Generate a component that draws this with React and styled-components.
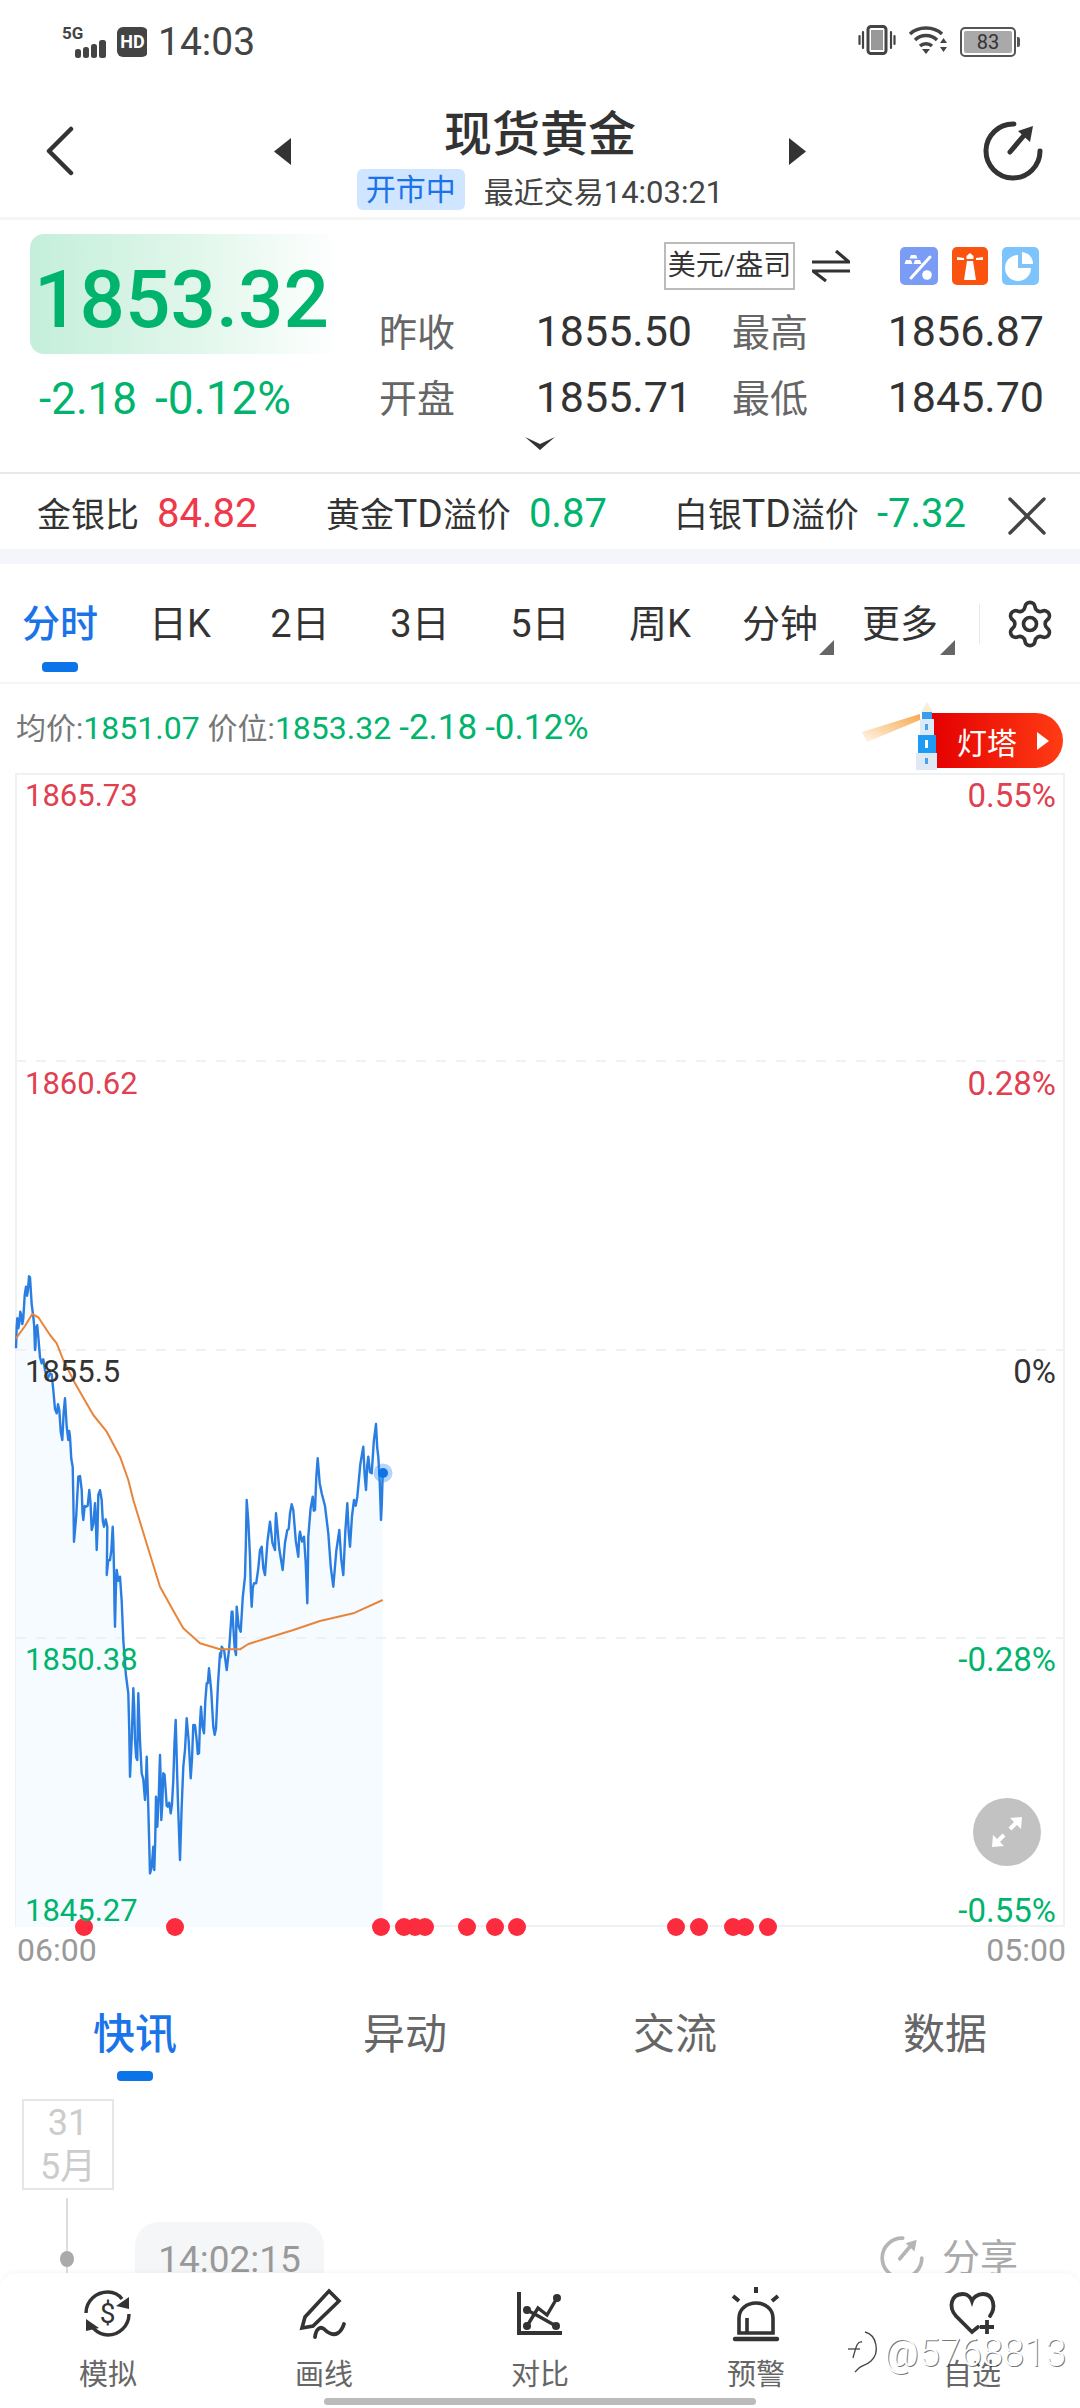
import React from 'react';
import styled, { createGlobalStyle } from 'styled-components';
import { Settings, X } from 'lucide-react';

const GREEN = '#00b46e';
const RED = '#f0384a';
const BLUE = '#0a74e8';

const GlobalStyle = createGlobalStyle`
  html, body {
    margin: 0;
    padding: 0;
    background: #fff;
  }
  * { box-sizing: border-box; }
`;

const Page = styled.div`
  position: relative;
  width: 1080px;
  height: 2408px;
  overflow: hidden;
  display: flex;
  flex-direction: column;
  background: #fff;
  color: #333;
  font-family: Roboto, "Noto Sans CJK SC", sans-serif;
`;

/* status bar */
const StatusBar = styled.div`
  height: 85px;
  display: flex;
  justify-content: space-between;
  padding: 25px 64px 0 62px;
`;

const StatusGroup = styled.div`
  display: flex;
  align-items: flex-start;
`;

const Clock = styled.span`
  font-size: 39px;
  line-height: 34px;
  margin-left: 11px;
  color: #444;
`;

const Battery = styled.div`
  position: relative;
  width: 56px;
  height: 30px;
  margin: 2px 0 0 12px;
  border: 2px solid #555;
  border-radius: 5px;
  padding: 2px;
  &::after {
    content: '';
    position: absolute;
    right: -6px;
    top: 8px;
    width: 3px;
    height: 10px;
    border-radius: 0 2px 2px 0;
    background: #555;
  }
`;

const BatteryFill = styled.div`
  height: 100%;
  background: #a9a9a9;
  border-radius: 2px;
  font-size: 20px;
  line-height: 22px;
  text-align: center;
  color: #333;
`;

/* header */
const Header = styled.header`
  height: 135px;
  display: grid;
  grid-template-columns: 274px 17px 1fr 17px 274px;
  align-items: center;
  border-bottom: 3px solid #f5f5f5;
`;

const BackCell = styled.div`
  padding-left: 45px;
  display: flex;
`;

const ShareCell = styled.div`
  padding-right: 37px;
  display: flex;
  justify-content: flex-end;
`;

const HeaderCenter = styled.div`
  display: flex;
  flex-direction: column;
  align-items: center;
  padding-top: 14px;
`;

const Title = styled.h1`
  margin: 0;
  font-size: 48px;
  line-height: 60px;
  font-weight: 500;
  color: #333;
`;

const SubLine = styled.div`
  display: flex;
  align-items: center;
  gap: 19px;
  margin-top: 3px;
  font-size: 30px;
  color: #444;
`;

const MarketBadge = styled.span`
  width: 108px;
  height: 41px;
  line-height: 41px;
  text-align: center;
  background: #d0e5ff;
  border-radius: 6px;
  color: #1a73e8;
`;

const Latin = styled.span`
  font-size: ${(p) => p.$size}px;
`;

/* quote */
const Quote = styled.section`
  position: relative;
  height: 254px;
  display: grid;
  grid-template-columns: 349px 1fr;
  padding: 14px 36px 0 30px;
  border-bottom: 2px solid #e8e8e8;
`;

const PriceBox = styled.div`
  width: 310px;
  height: 120px;
  border-radius: 14px;
  background: linear-gradient(90deg, #c4efda 0%, #e2f7ec 55%, #ffffff 100%);
  font-size: 80px;
  line-height: 120px;
  font-weight: 500;
  color: ${GREEN};
  padding: 6px 0 0 4px;
  white-space: nowrap;
`;

const ChangeLine = styled.div`
  display: flex;
  align-items: baseline;
  gap: 18px;
  margin: 22px 0 0 9px;
  font-size: 44px;
  line-height: 44px;
  color: ${GREEN};
  white-space: nowrap;
`;

const QuoteRight = styled.div`
  display: flex;
  flex-direction: column;
  margin-top: 3px;
`;

const UnitRow = styled.div`
  display: flex;
  align-items: center;
  height: 57px;
  padding-left: 285px;
`;

const UnitBox = styled.div`
  width: 131px;
  height: 48px;
  margin-right: 17px;
  border: 2px solid #bbb;
  font-size: 28px;
  line-height: 44px;
  text-align: center;
  color: #333;
  white-space: nowrap;
`;

const ToolIcons = styled.div`
  display: flex;
  gap: 14px;
  margin-left: 50px;
`;

const ToolIcon = styled.svg`
  display: block;
  border-radius: 5px;
  background: ${(p) => p.$bg};
`;

const StatsGrid = styled.div`
  display: grid;
  grid-template-columns: 313px 312px;
  column-gap: 40px;
  grid-auto-rows: 66px;
  margin-top: 5px;
  align-items: center;
`;

const Stat = styled.div`
  display: flex;
  justify-content: space-between;
  align-items: baseline;
  font-size: 38px;
  line-height: 44px;
`;

const StatLabel = styled.span`
  color: #666;
`;

const StatValue = styled.span`
  font-size: 43px;
  color: #333;
`;

const MoreChevron = styled.svg`
  position: absolute;
  left: 525px;
  top: 217px;
`;

/* ticker */
const Ticker = styled.div`
  height: 75px;
  display: grid;
  grid-template-columns: 289px 348px 336px auto;
  align-items: center;
  padding: 0 0 8px 37px;
  font-size: 34px;
  color: #333;
`;

const TickerItem = styled.div`
  display: flex;
  align-items: baseline;
  gap: 18px;
  white-space: nowrap;
`;

const TickerValue = styled.span`
  font-size: 40px;
  color: ${(p) => (p.$up ? RED : GREEN)};
`;

const CloseIcon = styled(X)`
  margin: 8px 0 0 -17px;
`;

const Band = styled.div`
  height: 15px;
  background: #f5f6fc;
`;

/* period tabs */
const PeriodBar = styled.nav`
  position: relative;
  height: 120px;
  display: grid;
  grid-template-columns: repeat(8, 120px) 1fr;
  align-items: start;
  border-bottom: 2px solid #f4f4f4;
`;

const PeriodTab = styled.div`
  position: relative;
  height: 120px;
  text-align: center;
  font-size: 38px;
  line-height: 50px;
  padding-top: 35px;
  font-weight: ${(p) => (p.$active ? 500 : 400)};
  color: ${(p) => (p.$active ? '#1a73e8' : '#333')};
`;

const Underline = styled.div`
  width: 36px;
  height: 10px;
  margin: ${(p) => p.$top}px auto 0;
  border-radius: 4px;
  background: ${BLUE};
`;

const Corner = styled.span`
  position: absolute;
  right: ${(p) => p.$right}px;
  top: 76px;
  width: 0;
  height: 0;
  border-style: solid;
  border-width: 0 0 15px 15px;
  border-color: transparent transparent #666 transparent;
`;

const GearCell = styled.div`
  display: flex;
  align-items: center;
  height: 40px;
  margin: 40px 0 0 19px;
  padding-left: 24px;
  border-left: 1px solid #e8e8e8;
  color: #333;
`;

/* info row */
const InfoRow = styled.div`
  height: 89px;
  display: flex;
  justify-content: space-between;
  padding: 0 17px 3px 16px;
  font-size: 32px;
  color: ${GREEN};
  white-space: nowrap;
`;

const InfoText = styled.div`
  display: flex;
  align-items: baseline;
  gap: 8px;
  margin-top: 24px;
  line-height: 40px;
`;

const InfoLabel = styled.span`
  font-size: 30px;
  color: #777;
`;

const Beacon = styled.div`
  display: flex;
  align-items: flex-end;
  align-self: flex-end;
`;

const BeaconArt = styled.svg`
  position: relative;
  z-index: 1;
  display: block;
`;

const BeaconPill = styled.div`
  width: 131px;
  height: 55px;
  margin: 0 0 2px -5px;
  display: flex;
  align-items: center;
  padding-left: 25px;
  gap: 20px;
  border-radius: 0 28px 28px 0;
  background: linear-gradient(90deg, #e40000 0%, #ff3c14 100%);
  color: #fff;
  font-size: 30px;
`;

const PlayMark = styled.span`
  width: 0;
  height: 0;
  border-style: solid;
  border-width: 9px 0 9px 12px;
  border-color: transparent transparent transparent #fff;
`;

/* chart */
const ChartWrap = styled.div`
  position: relative;
  height: 1154px;
  flex: none;
  margin: 0 15px;
  border: 2px solid #f0f1f3;
`;

const ChartSvg = styled.svg`
  position: absolute;
  left: -2px;
  top: -2px;
  overflow: visible;
`;

const ScaleLayer = styled.div`
  position: absolute;
  inset: 0;
  display: flex;
  flex-direction: column;
  padding: 3px 7px 0 8px;
`;

const ScaleRow = styled.div`
  height: ${(p) => p.$h}px;
  flex: none;
  display: flex;
  justify-content: space-between;
  font-size: 31px;
  line-height: 36px;
  color: ${(p) => (p.$tone === 'up' ? '#e0404f' : p.$tone === 'down' ? GREEN : '#333')};
`;

const ScaleRight = styled.span`
  font-size: 33px;
`;

const ExpandButton = styled.div`
  position: absolute;
  right: 22px;
  bottom: 59px;
  width: 68px;
  height: 68px;
  border-radius: 50%;
  background: #c2c2c2;
  display: flex;
  align-items: center;
  justify-content: center;
`;

const TimeAxis = styled.div`
  height: 43px;
  display: flex;
  justify-content: space-between;
  padding: 5px 14px 0 17px;
  font-size: 32px;
  line-height: 36px;
  color: #999;
`;

/* news */
const NewsTabs = styled.div`
  height: 115px;
  display: grid;
  grid-template-columns: repeat(4, 1fr);
  text-align: center;
`;

const NewsTab = styled.div`
  padding-top: 35px;
  font-size: 42px;
  line-height: 60px;
  color: ${(p) => (p.$active ? '#1a73e8' : '#666')};
  font-weight: ${(p) => (p.$active ? 500 : 400)};
`;

const NewsBody = styled.div`
  flex: 1;
  overflow: hidden;
`;

const DateBox = styled.div`
  width: 92px;
  height: 91px;
  margin: 14px 0 0 22px;
  border: 2px solid #e6e6e6;
  text-align: center;
  font-size: 36px;
  line-height: 44px;
  color: #ccc;
`;

const NewsRow = styled.div`
  display: flex;
  margin-top: 8px;
`;

const Rail = styled.div`
  position: relative;
  width: 135px;
  height: 120px;
  flex: none;
  &::before {
    content: '';
    position: absolute;
    left: 66px;
    top: 0;
    bottom: 0;
    width: 2px;
    background: #ddd;
  }
`;

const RailDot = styled.span`
  position: absolute;
  left: 60px;
  top: 53px;
  width: 14px;
  height: 16px;
  border-radius: 50%;
  background: #aaa;
`;

const TimeChip = styled.div`
  width: 189px;
  height: 80px;
  margin-top: 24px;
  border-radius: 24px 24px 0 0;
  background: #f5f6f8;
  font-size: 37px;
  line-height: 76px;
  text-align: center;
  color: #999;
`;

const ShareLink = styled.div`
  display: flex;
  align-items: flex-start;
  gap: 18px;
  margin: 38px 0 0 auto;
  padding-right: 62px;
  font-size: 38px;
  line-height: 44px;
  color: #aaa;
`;

/* bottom bar */
const BottomBar = styled.footer`
  position: relative;
  height: 135px;
  flex: none;
  display: grid;
  grid-template-columns: repeat(5, 216px);
  border-radius: 16px 16px 0 0;
  background: #fff;
  box-shadow: 0 -2px 4px rgba(0, 0, 0, 0.03);
`;

const BottomItem = styled.div`
  display: flex;
  flex-direction: column;
  align-items: center;
  padding-top: 13px;
  font-size: 29px;
  line-height: 40px;
  color: #666;
`;

const BottomIcon = styled.svg`
  display: block;
  margin-bottom: 13px;
`;

const HomeBar = styled.div`
  position: absolute;
  left: 324px;
  bottom: 3px;
  width: 432px;
  height: 7px;
  border-radius: 4px;
  background: #bbb;
`;

const Watermark = styled.div`
  position: absolute;
  left: 847px;
  top: 2331px;
  display: flex;
  align-items: flex-start;
  gap: 5px;
  font-size: 38px;
  font-weight: 300;
  line-height: 44px;
  color: #fff;
  text-shadow: 1px 1px 0 rgba(0, 0, 0, 0.55);
  white-space: nowrap;
`;

const PERIODS = ['分时', '日K', '2日', '3日', '5日', '周K', '分钟', '更多'];
const NEWS = ['快讯', '异动', '交流', '数据'];
const DOTS = [84, 175, 381, 404, 415, 425, 467, 495, 517, 676, 699, 733, 745, 768];

// traced from the intraday curve, x and y at 3x, y measured from 1240
const PRICE = [
  [48, 325], [52, 235], [58, 250], [64, 225], [70, 235], [78, 140], [84, 150], [90, 112], [100, 230], [105, 330],
  [108, 265], [115, 290], [125, 370], [135, 390], [150, 400], [160, 450], [170, 520], [178, 510], [187, 600], [195, 475],
  [205, 600], [210, 590], [218, 680], [222, 905], [235, 710], [245, 750], [250, 840], [258, 800], [268, 750], [275, 870],
  [285, 790], [290, 930], [295, 765], [305, 780], [312, 860], [322, 860], [320, 1005], [330, 960], [338, 860], [342, 990],
  [345, 1160], [350, 990], [360, 1010], [370, 1200], [385, 1360], [390, 1610], [400, 1345], [405, 1500], [412, 1560], [415, 1360],
  [425, 1600], [435, 1680], [440, 1550], [450, 1900], [460, 1820], [463, 1890], [468, 1670], [472, 1760], [480, 1545], [484, 1740],
  [490, 1600], [497, 1650], [503, 1700], [512, 1720], [520, 1620], [527, 1440], [540, 1860], [550, 1580], [560, 1435], [572, 1615],
  [580, 1455], [590, 1500], [597, 1540], [603, 1400], [612, 1480], [620, 1330], [627, 1285], [640, 1460], [648, 1465], [660, 1240],
  [665, 1220], [680, 1290], [695, 1115], [700, 1160], [708, 1245], [710, 1100], [722, 1175], [735, 1010], [740, 780], [750, 950],
  [755, 1100], [762, 1030], [775, 985], [785, 920], [795, 1005], [810, 845], [825, 930], [828, 820], [848, 990], [862, 870],
  [870, 820], [880, 810], [895, 950], [900, 875], [912, 890], [922, 1090], [925, 890], [938, 770], [945, 810], [953, 655],
  [965, 760], [985, 880], [1000, 1040], [1018, 870], [1030, 1005], [1042, 790], [1050, 920], [1062, 780], [1072, 770], [1090, 620],
  [1098, 750], [1105, 650], [1115, 700], [1128, 552], [1135, 650], [1143, 840], [1148, 700],
];

const AVERAGE = [
  [48, 295], [75, 258], [97, 222], [115, 232], [150, 285], [170, 310], [190, 360], [225, 430], [280, 525], [320, 575],
  [360, 650], [385, 720], [400, 780], [455, 960], [480, 1040], [530, 1130], [550, 1165], [600, 1210], [660, 1228], [720, 1228],
  [745, 1212], [800, 1195], [880, 1170], [960, 1143], [1060, 1120], [1148, 1080],
];

const toPoints = (list) =>
  list.map(([x, y]) => `${(x / 3).toFixed(1)},${(1240 + y / 3).toFixed(1)}`).join(' ');

const withTicks = (list) =>
  list.flatMap((point, i) => {
    const next = list[i + 1];
    if (!next) return [point];
    const swing = i % 2 ? 22 : -22;
    return [point, [(point[0] + next[0]) / 2, (point[1] + next[1]) / 2 + swing]];
  });

const pricePoints = toPoints(withTicks(PRICE));

function SignalIcon() {
  return (
    <svg width="85" height="34" viewBox="0 0 85 34">
      <text x="0" y="14" fontSize="17" fontWeight="700" fontFamily="Roboto, sans-serif" fill="#444">5G</text>
      <rect x="13" y="24" width="6" height="9" rx="2.500" fill="#444" />
      <rect x="21" y="22" width="6" height="11" rx="2.500" fill="#444" />
      <rect x="29" y="19" width="6" height="14" rx="2.500" fill="#444" />
      <rect x="37" y="15" width="7" height="18" rx="2.500" fill="#444" />
      <rect x="55" y="2" width="31" height="30" rx="6" fill="#444" />
      <text x="70.500" y="23" textAnchor="middle" fontSize="18" fontWeight="700" fontFamily="Roboto, sans-serif" fill="#fff">HD</text>
    </svg>
  );
}

function VibrateIcon() {
  return (
    <svg width="38" height="30" viewBox="0 0 38 30" fill="none" stroke="#444">
      <rect x="10" y="1.500" width="18" height="27" rx="3" strokeWidth="3" />
      <rect x="13" y="5" width="12" height="20" fill="#999" stroke="none" />
      <path d="M5 7v16M1.500 11v8M33 7v16M36.500 11v8" strokeWidth="2.200" strokeLinecap="round" />
    </svg>
  );
}

function WifiIcon() {
  return (
    <svg width="40" height="30" viewBox="0 0 40 30" fill="none" stroke="#444" strokeWidth="3.400" style={{ marginLeft: 12 }}>
      <path d="M2 9C10 1 26 1 34 9" />
      <path d="M7 15C13 9 23 9 29 15" />
      <path d="M12 21C15 18 21 18 24 21" />
      <path d="M14 24h8l-4 5z" fill="#444" stroke="none" />
      <path d="M32 18h7l-3.500-5zM32 22h7l-3.500 5z" fill="#444" stroke="none" />
    </svg>
  );
}

function ShareIcon({ size = 60, color = '#333', weight = 5 }) {
  return (
    <svg width={size} height={size} viewBox="0 0 60 60" fill="none" stroke={color} strokeWidth={weight} strokeLinecap="round">
      <path d="M31 3A27 27 0 1 0 57 30" />
      <path d="M27 31L43 12" />
      <path d="M50 5L47 21L35 10Z" fill={color} stroke="none" />
    </svg>
  );
}

function SwapIcon() {
  return (
    <svg width="38" height="32" viewBox="0 0 38 32" fill="none" stroke="#333" strokeWidth="3.200">
      <path d="M0 12H37L24 1" />
      <path d="M38 21H1L14 31" />
    </svg>
  );
}

function RatioTool() {
  return (
    <ToolIcon $bg="#7b9cf5" width="38" height="38" viewBox="0 0 38 38" fill="#fff">
      <path d="M30 10L11 31" stroke="#fff" strokeWidth="3" strokeLinecap="round" />
      <circle cx="27" cy="28" r="4.800" />
      <path d="M11 8H16L17.500 11.500H9.500ZM6 13H11L12.500 17H4.500ZM15 13H20L21.500 17H13.500Z" />
    </ToolIcon>
  );
}

function TowerTool() {
  return (
    <ToolIcon $bg="#f9530f" width="36" height="38" viewBox="0 0 36 38" fill="#fff">
      <path d="M15 14H21L24 33H12Z" />
      <path d="M18 6L21.500 9V12H14.500V9Z" />
      <path d="M5 10L12 11V13L5 13ZM31 10L24 11V13L31 13Z" />
    </ToolIcon>
  );
}

function PieTool() {
  return (
    <ToolIcon $bg="#7cc4fb" width="37" height="38" viewBox="0 0 37 38" fill="#fff">
      <path d="M16 8V21H29A13 13 0 1 1 16 8Z" />
      <path d="M20 5A12 12 0 0 1 31 17H20Z" />
    </ToolIcon>
  );
}

function Lighthouse() {
  return (
    <BeaconArt width="75" height="68" viewBox="0 0 75 68">
      <defs>
        <linearGradient id="beam" x1="0" y1="1" x2="1" y2="0">
          <stop offset="0" stopColor="#fff6ea" />
          <stop offset="1" stopColor="#f7a94e" />
        </linearGradient>
      </defs>
      <path d="M0 30L58 12L58 18L5 40Z" fill="url(#beam)" />
      <path d="M65 0L59 10H71Z" fill="#f8edd6" />
      <rect x="60" y="10" width="10" height="7" fill="#3a9df0" />
      <rect x="58" y="17" width="14" height="16" fill="#dceaf8" />
      <rect x="63" y="22" width="3" height="6" fill="#4aa3ea" />
      <rect x="56" y="33" width="18" height="18" fill="#1e9bf5" />
      <rect x="63" y="38" width="3" height="8" fill="#fff" />
      <rect x="54" y="51" width="21" height="17" fill="#dfe8f5" />
      <rect x="63" y="56" width="3" height="6" fill="#4aa3ea" />
    </BeaconArt>
  );
}

function SimIcon() {
  return (
    <BottomIcon width="56" height="56" viewBox="0 0 56 56" fill="none" stroke="#333" strokeWidth="3.400">
      <path d="M6 27C6 15 16 6 28 6C34 6 39 9 42 13" />
      <path d="M49 28C49 40 39 49 28 49C22 49 17 46 13 42" />
      <path d="M49 11V23L36 20Z" fill="#333" stroke="none" />
      <path d="M6 33V45L19 42Z" fill="#333" stroke="none" />
      <text x="27.500" y="37" textAnchor="middle" fontSize="28" fontFamily="Roboto, sans-serif" fill="#333" stroke="none">$</text>
    </BottomIcon>
  );
}

function DrawIcon() {
  return (
    <BottomIcon width="56" height="56" viewBox="0 0 56 56" fill="none" stroke="#333" strokeWidth="3.600" strokeLinejoin="miter" strokeLinecap="round">
      <path d="M33 5L43 15L17 40L6 42L9 31Z" />
      <path d="M19 51C20 43 24 40 28 43C32 47 37 50 42 47C45 45 47 41 48 38" strokeWidth="3.800" />
    </BottomIcon>
  );
}

function CompareIcon() {
  return (
    <BottomIcon width="56" height="56" viewBox="0 0 56 56" fill="none" stroke="#333">
      <path d="M7 6V47H50" strokeWidth="4" />
      <path d="M15 40L26 22L35 29L45 12" strokeWidth="3.400" />
      <path d="M15 24L28 31L44 40" strokeWidth="3.400" />
      <g fill="#333" stroke="none">
        <circle cx="15" cy="40" r="4" />
        <circle cx="45" cy="12" r="4" />
        <circle cx="15" cy="24" r="4" />
        <circle cx="44" cy="40" r="4" />
      </g>
    </BottomIcon>
  );
}

function AlarmIcon() {
  return (
    <BottomIcon width="56" height="56" viewBox="0 0 56 56" fill="none" stroke="#333" strokeWidth="3.600">
      <path d="M28 1V7M5 10L11 15M50 10L44 15" strokeWidth="4" />
      <path d="M11 47V32C11 23 19 17 28 17C37 17 45 23 45 32V47Z" />
      <path d="M19 47V32" />
      <path d="M7 53H49" strokeWidth="4.400" strokeLinecap="round" />
    </BottomIcon>
  );
}

function WatchIcon() {
  return (
    <BottomIcon width="56" height="56" viewBox="0 0 56 56" fill="none" stroke="#333" strokeWidth="3.800">
      <path d="M34 41L28 46L12 30C4 21 7 8 19 8C24 8 27 12 28 15C29 12 33 8 39 8C50 8 52 22 46 30" strokeLinecap="round" />
      <path d="M43 34V48M36 41H50" />
    </BottomIcon>
  );
}

const BOTTOM = [
  ['模拟', SimIcon],
  ['画线', DrawIcon],
  ['对比', CompareIcon],
  ['预警', AlarmIcon],
  ['自选', WatchIcon],
];

function Chart() {
  return (
    <ChartWrap>
      <ChartSvg width="1050" height="1154" viewBox="15 773 1050 1154" fill="none">
        <polygon points={`16,1927 ${pricePoints} 382.700,1927`} fill="#f5fbff" />
        <path d="M16 1061H1064M16 1350H1064M16 1638H1064" stroke="#f0f1f3" strokeWidth="2" strokeDasharray="10 10" />
        <polyline points={pricePoints} stroke="#2a7de1" strokeWidth="2.400" strokeLinejoin="round" />
        <polyline points={toPoints(AVERAGE)} stroke="#e8853a" strokeWidth="2" strokeLinejoin="round" />
        <circle cx="383" cy="1473" r="9.500" fill="#2a86f0" opacity="0.35" />
        <circle cx="383" cy="1473" r="5" fill="#0a74e8" />
        {DOTS.map((x) => (
          <circle key={x} cx={x} cy="1927" r="9" fill="#fc2b3d" />
        ))}
      </ChartSvg>
      <ScaleLayer>
        <ScaleRow $h={288} $tone="up"><span>1865.73</span><ScaleRight>0.55%</ScaleRight></ScaleRow>
        <ScaleRow $h={288} $tone="up"><span>1860.62</span><ScaleRight>0.28%</ScaleRight></ScaleRow>
        <ScaleRow $h={288}><span>1855.5</span><ScaleRight>0%</ScaleRight></ScaleRow>
        <ScaleRow $h={251} $tone="down"><span>1850.38</span><ScaleRight>-0.28%</ScaleRight></ScaleRow>
        <ScaleRow $h={32} $tone="down"><span>1845.27</span><ScaleRight>-0.55%</ScaleRight></ScaleRow>
      </ScaleLayer>
      <ExpandButton>
        <svg width="34" height="34" viewBox="0 0 34 34" fill="#fff" stroke="#fff">
          <path d="M20 14L26 8" strokeWidth="4" />
          <path d="M32 2L31 14L20 3Z" stroke="none" />
          <path d="M14 20L8 26" strokeWidth="4" />
          <path d="M2 32L3 20L14 31Z" stroke="none" />
        </svg>
      </ExpandButton>
    </ChartWrap>
  );
}

export default function App() {
  return (
    <Page>
      <GlobalStyle />
      <StatusBar>
        <StatusGroup>
          <SignalIcon />
          <Clock>14:03</Clock>
        </StatusGroup>
        <StatusGroup>
          <VibrateIcon />
          <WifiIcon />
          <Battery><BatteryFill>83</BatteryFill></Battery>
        </StatusGroup>
      </StatusBar>

      <Header>
        <BackCell>
          <svg width="30" height="50" viewBox="0 0 30 50" fill="none" stroke="#333" strokeWidth="4.500" strokeLinecap="round" strokeLinejoin="round">
            <path d="M26 3L4 25L26 47" />
          </svg>
        </BackCell>
        <svg width="17" height="27" viewBox="0 0 17 27"><path d="M17 0V27L0 13.500Z" fill="#333" /></svg>
        <HeaderCenter>
          <Title>现货黄金</Title>
          <SubLine>
            <MarketBadge>开市中</MarketBadge>
            <span>最近交易<Latin $size={31}>14:03:21</Latin></span>
          </SubLine>
        </HeaderCenter>
        <svg width="17" height="27" viewBox="0 0 17 27"><path d="M0 0V27L17 13.500Z" fill="#333" /></svg>
        <ShareCell><ShareIcon /></ShareCell>
      </Header>

      <Quote>
        <div>
          <PriceBox>1853.32</PriceBox>
          <ChangeLine><span>-2.18</span><Latin $size={46}>-0.12%</Latin></ChangeLine>
        </div>
        <QuoteRight>
          <UnitRow>
            <UnitBox>美元/盎司</UnitBox>
            <SwapIcon />
            <ToolIcons>
              <RatioTool />
              <TowerTool />
              <PieTool />
            </ToolIcons>
          </UnitRow>
          <StatsGrid>
            <Stat><StatLabel>昨收</StatLabel><StatValue>1855.50</StatValue></Stat>
            <Stat><StatLabel>最高</StatLabel><StatValue>1856.87</StatValue></Stat>
            <Stat><StatLabel>开盘</StatLabel><StatValue>1855.71</StatValue></Stat>
            <Stat><StatLabel>最低</StatLabel><StatValue>1845.70</StatValue></Stat>
          </StatsGrid>
        </QuoteRight>
        <MoreChevron width="30" height="13" viewBox="0 0 30 13">
          <path d="M0 0L15 7L30 0L15 13Z" fill="#333" />
        </MoreChevron>
      </Quote>

      <Ticker>
        <TickerItem>金银比<TickerValue $up>84.82</TickerValue></TickerItem>
        <TickerItem><span>黄金<Latin $size={39}>TD</Latin>溢价</span><TickerValue>0.87</TickerValue></TickerItem>
        <TickerItem><span>白银<Latin $size={39}>TD</Latin>溢价</span><TickerValue>-7.32</TickerValue></TickerItem>
        <CloseIcon size={68} strokeWidth={1.2} color="#444" />
      </Ticker>
      <Band />

      <PeriodBar>
        {PERIODS.map((name, i) => (
          <PeriodTab key={name} $active={i === 0}>
            {name}
            {i === 0 && <Underline $top={13} />}
            {i > 5 && <Corner $right={i === 6 ? 6 : 5} />}
          </PeriodTab>
        ))}
        <GearCell><Settings size={52} strokeWidth={1.7} /></GearCell>
      </PeriodBar>

      <InfoRow>
        <InfoText>
          <span><InfoLabel>均价:</InfoLabel>1851.07</span>
          <span><InfoLabel>价位:</InfoLabel>1853.32</span>
          <Latin $size={35}>-2.18</Latin>
          <Latin $size={35}>-0.12%</Latin>
        </InfoText>
        <Beacon>
          <Lighthouse />
          <BeaconPill>灯塔<PlayMark /></BeaconPill>
        </Beacon>
      </InfoRow>

      <Chart />

      <TimeAxis><span>06:00</span><span>05:00</span></TimeAxis>

      <NewsTabs>
        {NEWS.map((name, i) => (
          <NewsTab key={name} $active={i === 0}>
            {name}
            {i === 0 && <Underline $top={6} />}
          </NewsTab>
        ))}
      </NewsTabs>

      <NewsBody>
        <DateBox>31<br />5月</DateBox>
        <NewsRow>
          <Rail><RailDot /></Rail>
          <TimeChip>14:02:15</TimeChip>
          <ShareLink>
            <ShareIcon size={44} color="#b5b5b5" weight={5} />
            分享
          </ShareLink>
        </NewsRow>
      </NewsBody>

      <BottomBar>
        {BOTTOM.map(([name, Icon]) => (
          <BottomItem key={name}>
            <Icon />
            {name}
          </BottomItem>
        ))}
        <HomeBar />
      </BottomBar>

      <Watermark>
        <svg width="32" height="42" viewBox="0 0 32 42" fill="none" stroke="#444" strokeWidth="1.300">
          <path d="M18 1C30 4 33 22 24 30C20 34 15 34 12 37L8 41" />
          <path d="M15 11C10 10 9 16 6 27" />
          <path d="M1 18H13" />
        </svg>
        <span>@5768813</span>
      </Watermark>
    </Page>
  );
}
